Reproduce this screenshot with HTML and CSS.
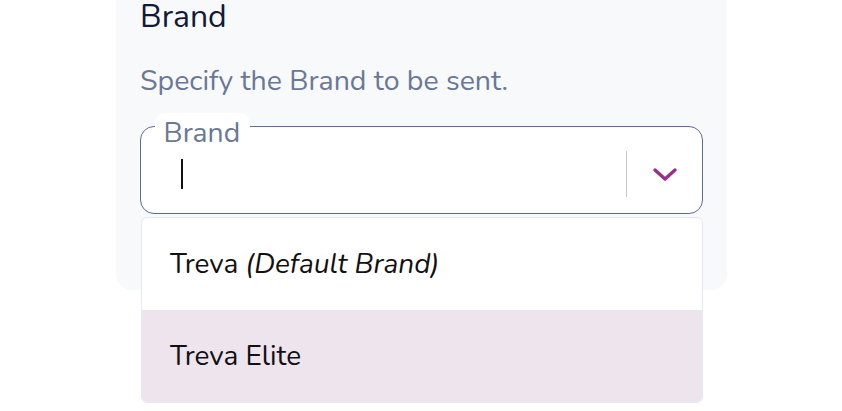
FILE: index.html
```html
<!DOCTYPE html>
<html lang="en">
<head>
<meta charset="utf-8">
<link rel="stylesheet" href="styles.css">
</head>
<body>
<div class="page">
  <section class="card">
    <h2 class="title">Brand</h2>
    <p class="desc">Specify the Brand to be sent.</p>
    <div class="field">
      <div class="control">
        <span class="label">Brand</span>
        <div class="value"><span class="caret"></span></div>
        <div class="indicators">
          <span class="sep"></span>
          <svg class="chev" width="26" height="16" viewBox="0 0 26 16"><path d="M3 3 L13 12 L23 3" fill="none" stroke="#9a2f8c" stroke-width="3.4" stroke-linecap="round" stroke-linejoin="round"/></svg>
        </div>
      </div>
      <ul class="menu">
        <li class="opt">Treva <em>(Default Brand)</em></li>
        <li class="opt focused">Treva Elite</li>
      </ul>
    </div>
  </section>
</div>
</body>
</html>
```
FILE: styles.css
```css
* { box-sizing: border-box; }
html, body { margin: 0; padding: 0; background: #fff; }
body { font-family: "Nunito", "Lato", "Noto Sans", sans-serif; min-height: 411px; }
.page { width: 842px; height: 411px; padding-left: 116px; }
.card {
  width: 611px;
  height: 290px;
  padding: 0 24px;
  background: #f8f9fb;
  border-radius: 0 0 16px 16px;
}
.title {
  margin: 0;
  font-size: 32px;
  font-weight: 400;
  line-height: 34px;
  color: #111a38;
}
.desc {
  margin: 29.8px 0 0 0;
  font-size: 28.5px;
  line-height: 34px;
  color: #6a7896;
}
.field { position: relative; margin-top: 28.2px; width: 563px; }
.control {
  position: relative;
  height: 88px;
  border: 1.5px solid #5b6d94;
  border-radius: 14px;
  background: #fff;
  display: flex;
  align-items: center;
}
.label {
  position: absolute;
  left: 13.5px;
  top: -13.5px;
  padding: 3px 10px 0 9px;
  background: #fff;
  border-radius: 10px 10px 0 0;
  font-size: 28.3px;
  line-height: 34px;
  color: #6a7896;
}
.value { flex: 1; padding-left: 40px; padding-top: 8px; }
.caret { display: block; width: 2px; height: 30px; background: #111; }
.indicators { display: flex; align-items: center; height: 100%; padding-top: 8px; }
.sep { width: 1.5px; height: 46px; background: #c8c8c8; }
.chev { margin: 2px 24px 0 25px; }
.menu {
  position: absolute;
  left: 1px;
  right: 0;
  top: 91px;
  margin: 0;
  padding: 0;
  list-style: none;
  background: #fff;
  border: 1px solid #e6e9ef;
  border-radius: 6px;
  overflow: hidden;
}
.opt {
  height: 92px;
  display: flex;
  align-items: center;
  padding-left: 28px;
  font-size: 28px;
  color: #111;
}
.opt em { font-style: italic; margin-left: 0.25em; }
.focused { background: #ede4ed; }
```
